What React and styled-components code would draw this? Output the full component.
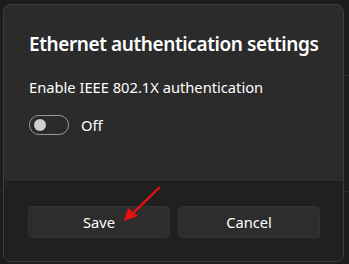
import React from 'react'
import styled, { createGlobalStyle } from 'styled-components'

const GlobalStyle = createGlobalStyle`
    html, body {
        margin: 0;
        padding: 0;
        background: #1c1c1c;
    }
    body {
        font-family: "Noto Sans", "Open Sans", sans-serif;
        color: #ffffff;
    }
`

const Page = styled.div`
    width: 349px;
    height: 264px;
    overflow: hidden;
    background-color: #1c1c1c;
    background-image:
        linear-gradient(#2a2a2a, #2a2a2a),
        linear-gradient(#2a2a2a, #2a2a2a);
    background-size: 100% 1px, 100% 1px;
    background-position: 0 75px, 0 191px;
    background-repeat: no-repeat;
    padding: 4px 0 0 3px;
    box-sizing: border-box;
`

const Dialog = styled.div`
    position: relative;
    width: 341px;
    height: 258px;
    box-sizing: border-box;
    border: 1px solid #3d3d3d;
    border-radius: 8px;
    overflow: hidden;
    display: flex;
    flex-direction: column;
    background: #2b2b2b;
`

const Body = styled.div`
    flex: 1;
    padding: 25px 20px 0 25px;
    display: flex;
    flex-direction: column;
`

const Title = styled.h2`
    margin: 0;
    font-size: 19px;
    letter-spacing: -0.4px;
    line-height: 28px;
    font-weight: 600;
    white-space: nowrap;
`

const Label = styled.p`
    margin: 19px 0 0;
    font-size: 14.7px;
    line-height: 20px;
`

const ToggleRow = styled.div`
    display: flex;
    align-items: center;
    gap: 12px;
    margin-top: 18px;
`

const Toggle = styled.div`
    width: 40px;
    height: 20px;
    box-sizing: border-box;
    border: 1px solid #9a9a9a;
    border-radius: 10px;
    display: flex;
    align-items: center;
    padding-left: 4px;
    &::before {
        content: "";
        width: 12px;
        height: 12px;
        border-radius: 50%;
        background: #cfcfcf;
    }
`

const ToggleText = styled.span`
    font-size: 14.7px;
    line-height: 20px;
`

const Footer = styled.div`
    height: 80px;
    box-sizing: border-box;
    background: #202020;
    border-top: 1px solid #1d1d1d;
    padding: 24px 23px 24px 24px;
    display: grid;
    grid-template-columns: 1fr 1fr;
    gap: 8px;
`

const Button = styled.button`
    height: 32px;
    border: 1px solid #333333;
    border-radius: 4px;
    background: #2d2d2d;
    color: #ffffff;
    font-family: inherit;
    font-size: 14.7px;
    padding: 0 0 1px;
`

const Arrow = styled.svg`
    position: absolute;
    left: 113px;
    top: 178px;
    pointer-events: none;
`

export default function App() {
    return (
        <>
            <GlobalStyle />
            <Page>
                <Dialog>
                    <Body>
                        <Title>Ethernet authentication settings</Title>
                        <Label>Enable IEEE 802.1X authentication</Label>
                        <ToggleRow>
                            <Toggle />
                            <ToggleText>Off</ToggleText>
                        </ToggleRow>
                    </Body>
                    <Footer>
                        <Button>Save</Button>
                        <Button>Cancel</Button>
                    </Footer>
                    <Arrow width="50" height="45" viewBox="0 0 50 45">
                        <line x1="42" y1="5" x2="14" y2="32" stroke="#e81010" strokeWidth="2.4" strokeLinecap="round" />
                        <polygon points="7,38 11,25 21,33" fill="#e81010" />
                    </Arrow>
                </Dialog>
            </Page>
        </>
    )
}
